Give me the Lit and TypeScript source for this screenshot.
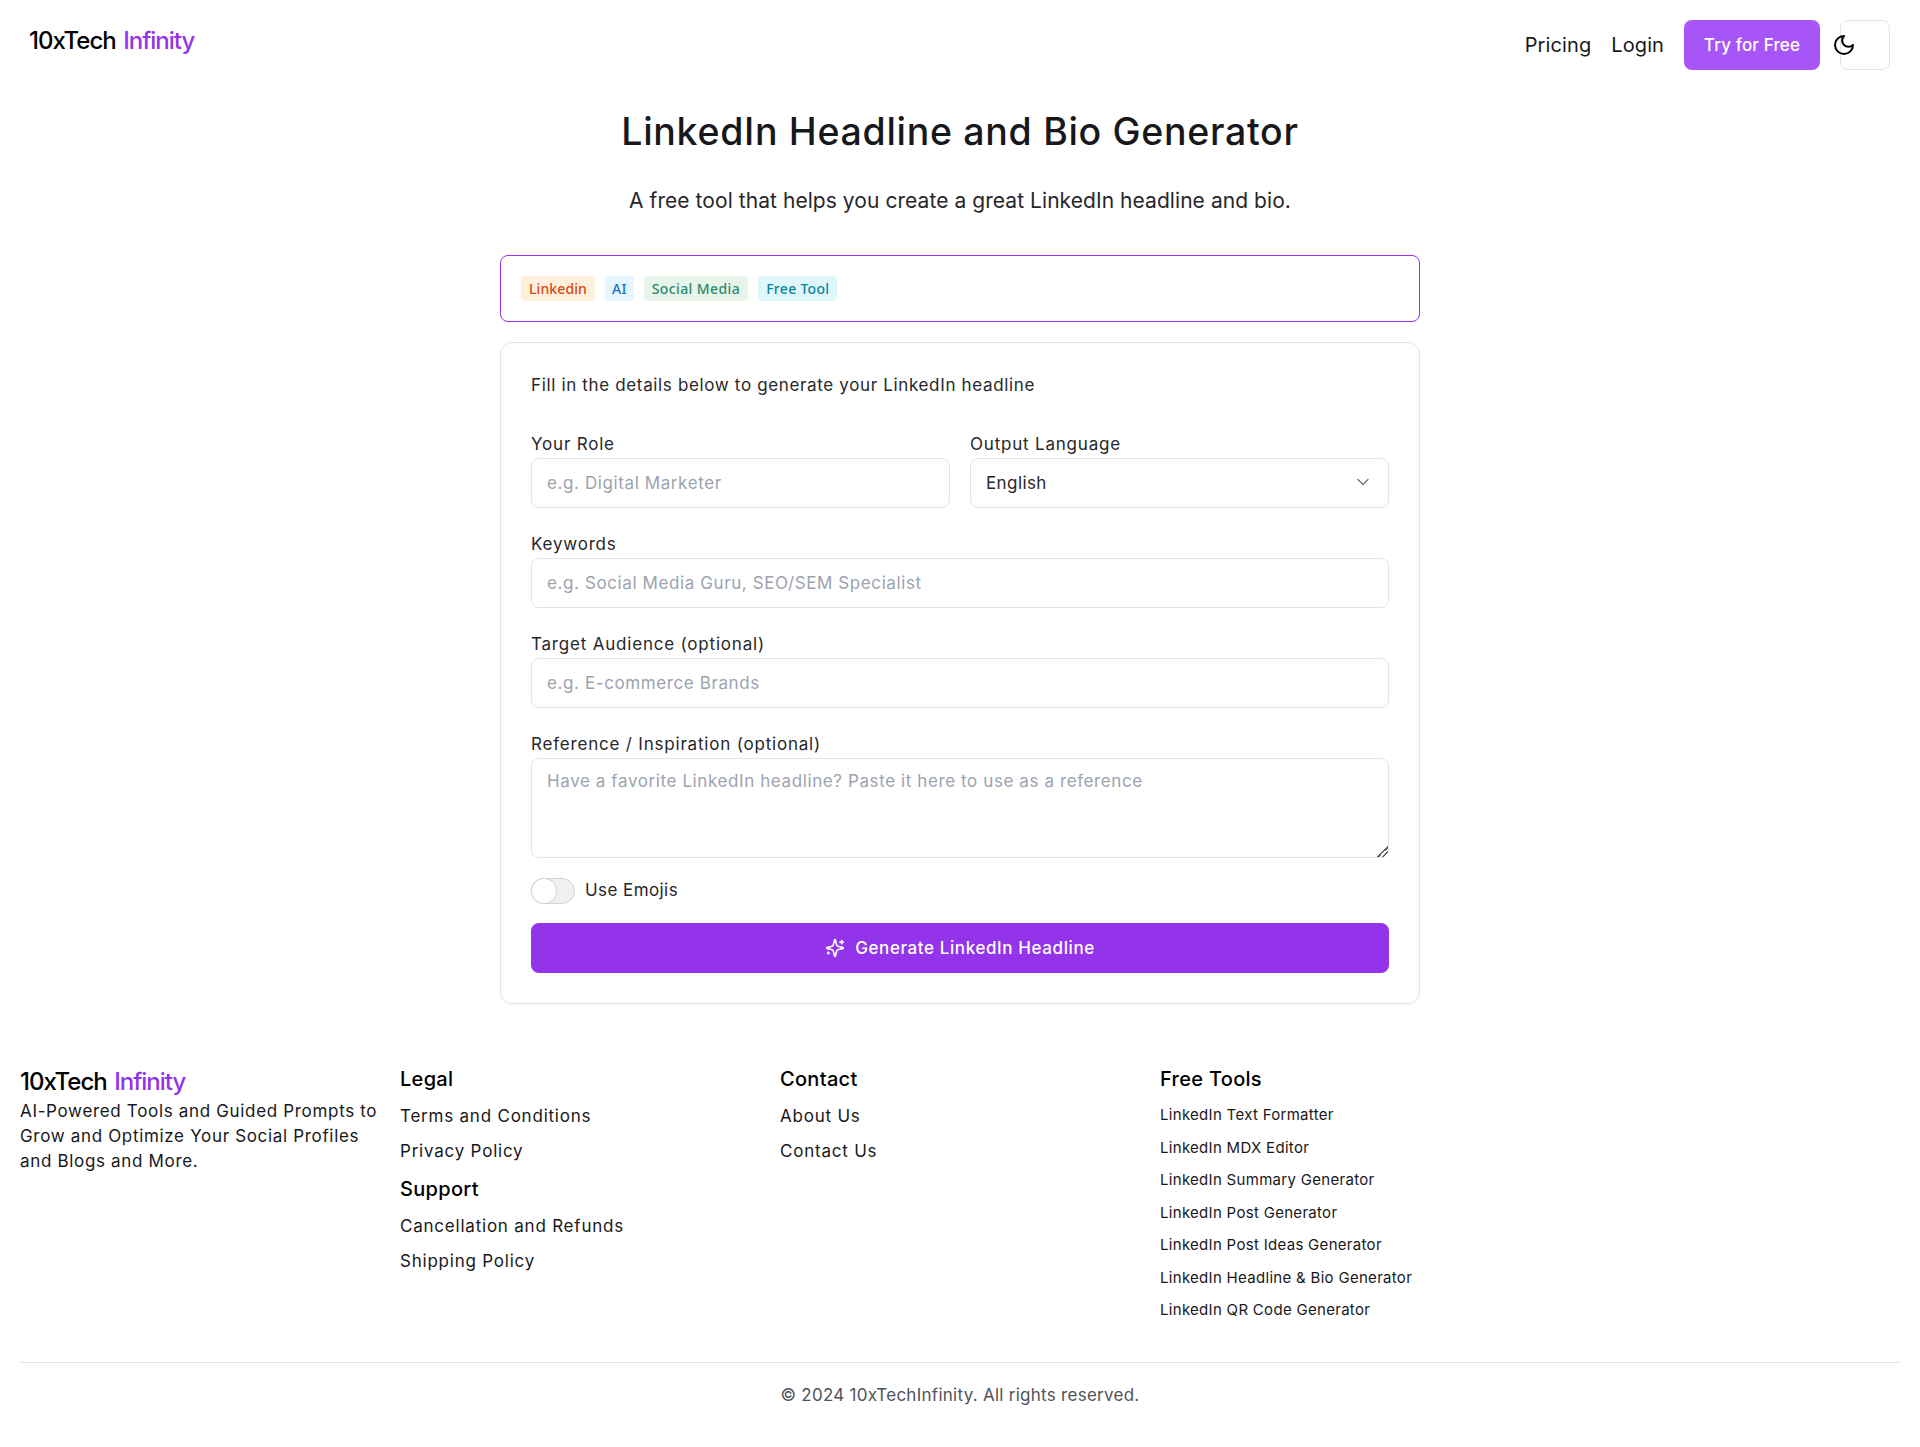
import { LitElement, html, css } from 'lit';
import { customElement } from 'lit/decorators.js';

const legal = ['Terms and Conditions', 'Privacy Policy'];
const support = ['Cancellation and Refunds', 'Shipping Policy'];
const contact = ['About Us', 'Contact Us'];
const tools = [
  'LinkedIn Text Formatter',
  'LinkedIn MDX Editor',
  'LinkedIn Summary Generator',
  'LinkedIn Post Generator',
  'LinkedIn Post Ideas Generator',
  'LinkedIn Headline & Bio Generator',
  'LinkedIn QR Code Generator',
];

@customElement('app-root')
export class AppRoot extends LitElement {
  static styles = css`
    :host {
      display: block;
      font-family: 'Inter', 'Noto Sans', sans-serif;
      color: #27272a;
      background: #fff;
      min-height: 1447px;
      letter-spacing: 0.6px;
    }
    * { box-sizing: border-box; }
    a { color: inherit; text-decoration: none; }

    .nav {
      display: flex;
      align-items: flex-start;
      justify-content: space-between;
      padding: 20px 30px 0 29px;
      height: 110px;
    }
    .logo {
      font-size: 24px;
      font-weight: 500;
      line-height: 30px;
      color: #000;
      letter-spacing: -1px;
      word-spacing: 2px;
    }
    .logo span { color: #9333ea; }
    .nav .logo { margin-top: 6px; }
    .nav-right { display: flex; align-items: center; gap: 20px; }
    .nav-link { font-size: 20px; color: #18181b; line-height: 50px; letter-spacing: 0.1px; }
    .try {
      height: 50px;
      width: 136px;
      border: 0;
      border-radius: 8px;
      background: #a855f7;
      color: #fff;
      font: 500 17px 'Inter', sans-serif;
      letter-spacing: 0.15px;
    }
    .theme {
      width: 50px;
      height: 50px;
      padding: 0;
      border: 1px solid #e4e4e7;
      border-radius: 8px;
      background: #fff;
      display: flex;
      align-items: center;
    }
    .theme svg { margin-left: -9px; }

    main { width: 920px; margin: 0 auto; }
    h1 {
      margin: 0;
      text-align: center;
      font-size: 37.5px;
      font-weight: 500;
      line-height: 44px;
      color: #18181b;
      letter-spacing: 0.69px;
    }
    .sub {
      margin: 33px 0 0;
      text-align: center;
      font-size: 21px;
      line-height: 28px;
      letter-spacing: 0.06px;
    }
    .tags {
      margin-top: 40px;
      height: 67px;
      padding: 20px;
      display: flex;
      gap: 10px;
      border: 1px solid #9333ea;
      border-radius: 8px;
    }
    .tag {
      height: 25px;
      padding: 0 8px;
      border-radius: 4px;
      font: 500 14px/25px 'Noto Sans', sans-serif;
      letter-spacing: 0.3px;
    }
    .orange { background: #fff0dd; color: #d9480f; letter-spacing: 0.1px; }
    .blue { background: #e7f5ff; color: #1971c2; padding: 0 7px; }
    .green { background: #e6f4ea; color: #2b8a6e; letter-spacing: 0.4px; }
    .cyan { background: #dff7fa; color: #0c8599; }

    .card {
      margin-top: 20px;
      height: 662px;
      padding: 30px;
      border: 1px solid #e4e4e7;
      border-radius: 12px;
      box-shadow: 0 1px 2px rgba(0, 0, 0, 0.04);
      display: flex;
      flex-direction: column;
    }
    .intro { font-size: 17px; line-height: 24px; margin-bottom: 31px; letter-spacing: 0.65px; }
    .row { display: grid; grid-template-columns: 1fr 1fr; gap: 20px; }
    .field { display: flex; flex-direction: column; margin-bottom: 20px; }
    label { font-size: 17px; line-height: 30px; height: 30px; padding-top: 1px; letter-spacing: 0.8px; }
    input, select, textarea {
      width: 100%;
      height: 50px;
      padding: 0 15px;
      border: 1px solid #e4e4e7;
      border-radius: 8px;
      background: #fff;
      color: #27272a;
      font: 400 17px 'Inter', sans-serif;
      letter-spacing: 0.6px;
      outline: none;
    }
    input::placeholder, textarea::placeholder { color: #9ca3af; opacity: 1; }
    .select-wrap { position: relative; }
    select { appearance: none; letter-spacing: 0.4px; }
    .select-wrap svg { position: absolute; right: 16px; top: 14px; pointer-events: none; }
    textarea {
      display: block;
      height: 100px;
      padding: 11px 15px;
      resize: vertical;
      line-height: 22px;
    }
    textarea::-webkit-resizer {
      background: linear-gradient(135deg, transparent 62%, #666 62%, #666 70%, transparent 70%, transparent 78%, #666 78%, #666 86%, transparent 86%);
    }
    .emoji { display: flex; align-items: center; gap: 10px; height: 26px; margin-bottom: 19px; font-size: 17px; letter-spacing: 0.42px; line-height: 24px; }
    .emoji span { margin-top: -2px; }
    .switch {
      width: 44px;
      height: 26px;
      border: 1px solid #d4d4d8;
      border-radius: 13px;
      background: #f0f0f3;
    }
    .switch i {
      display: block;
      width: 24px;
      height: 24px;
      border-radius: 50%;
      background: #fff;
      box-shadow: 0 0 1px 1px #d4d4d8;
    }
    .generate {
      height: 50px;
      border: 0;
      border-radius: 8px;
      background: #9333ea;
      color: #fff;
      font: 500 17px 'Inter', sans-serif;
      letter-spacing: 0.6px;
      display: flex;
      align-items: center;
      justify-content: center;
      gap: 10px;
    }

    footer { padding: 0 20px; margin-top: 60px; }
    .cols {
      display: grid;
      grid-template-columns: repeat(4, 360px);
      column-gap: 20px;
      height: 299px;
      border-bottom: 1px solid #e4e4e7;
    }
    .about p { margin: 1px 0 0; font-size: 17px; line-height: 25px; color: #18181b; letter-spacing: 0.67px; }
    .about .logo { line-height: 32px; margin-top: 2px; }
    h3 {
      margin: 0 0 5px;
      font-size: 20px;
      font-weight: 500;
      line-height: 30px;
      color: #000;
      letter-spacing: 0.3px;
    }
    .links { list-style: none; margin: 0 0 5px; padding: 0; }
    .links li { font-size: 17px; line-height: 35px; height: 35px; color: #18181b; letter-spacing: 0.78px; }
    .small { margin-top: 1px; }
    .small li { font-size: 15px; line-height: 32.5px; height: 32.5px; letter-spacing: 0.3px; }
    .copy {
      margin: 0;
      padding-top: 20px;
      text-align: center;
      font-size: 17px;
      line-height: 24px;
      color: #52525b;
      letter-spacing: 0.27px;
    }
  `;

  private list(items: string[], cls = '') {
    return html`<ul class="links ${cls}">${items.map((t) => html`<li><a href="#">${t}</a></li>`)}</ul>`;
  }

  render() {
    return html`
      <header class="nav">
        <div class="logo">10xTech <span>Infinity</span></div>
        <div class="nav-right">
          <a class="nav-link" href="#">Pricing</a>
          <a class="nav-link" href="#">Login</a>
          <button class="try">Try for Free</button>
          <button class="theme" aria-label="Toggle theme">
            <svg width="24" height="24" viewBox="0 0 24 24" fill="none" stroke="#000" stroke-width="2" stroke-linecap="round" stroke-linejoin="round">
              <path d="M12 3a6 6 0 0 0 9 9 9 9 0 1 1-9-9Z" />
            </svg>
          </button>
        </div>
      </header>
      <main>
        <h1>LinkedIn Headline and Bio Generator</h1>
        <p class="sub">A free tool that helps you create a great LinkedIn headline and bio.</p>
        <div class="tags">
          <span class="tag orange">Linkedin</span>
          <span class="tag blue">AI</span>
          <span class="tag green">Social Media</span>
          <span class="tag cyan">Free Tool</span>
        </div>
        <section class="card">
          <div class="intro">Fill in the details below to generate your LinkedIn headline</div>
          <div class="row">
            <div class="field">
              <label>Your Role</label>
              <input placeholder="e.g. Digital Marketer" />
            </div>
            <div class="field">
              <label>Output Language</label>
              <div class="select-wrap">
                <select><option>English</option></select>
                <svg width="20" height="20" viewBox="0 0 24 24" fill="none" stroke="#71717a" stroke-width="1.5" stroke-linecap="round" stroke-linejoin="round">
                  <path d="m6 9 6 6 6-6" />
                </svg>
              </div>
            </div>
          </div>
          <div class="field">
            <label>Keywords</label>
            <input placeholder="e.g. Social Media Guru, SEO/SEM Specialist" />
          </div>
          <div class="field">
            <label>Target Audience (optional)</label>
            <input placeholder="e.g. E-commerce Brands" />
          </div>
          <div class="field">
            <label>Reference / Inspiration (optional)</label>
            <textarea placeholder="Have a favorite LinkedIn headline? Paste it here to use as a reference"></textarea>
          </div>
          <div class="emoji">
            <div class="switch"><i></i></div>
            <span>Use Emojis</span>
          </div>
          <button class="generate">
            <svg width="20" height="20" viewBox="0 0 24 24" fill="none" stroke="#fff" stroke-width="2" stroke-linecap="round" stroke-linejoin="round">
              <path d="M9.937 15.5A2 2 0 0 0 8.5 14.063l-6.135-1.582a.5.5 0 0 1 0-.962L8.5 9.936A2 2 0 0 0 9.937 8.5l1.582-6.135a.5.5 0 0 1 .963 0L14.063 8.5A2 2 0 0 0 15.5 9.937l6.135 1.581a.5.5 0 0 1 0 .964L15.5 14.063a2 2 0 0 0-1.437 1.437l-1.582 6.135a.5.5 0 0 1-.963 0z" />
              <path d="M20 3v4M22 5h-4M4 17v2M5 18H3" />
            </svg>
            Generate LinkedIn Headline
          </button>
        </section>
      </main>
      <footer>
        <div class="cols">
          <div class="about">
            <div class="logo">10xTech <span>Infinity</span></div>
            <p>AI-Powered Tools and Guided Prompts to Grow and Optimize Your Social Profiles and Blogs and More.</p>
          </div>
          <div>
            <h3>Legal</h3>
            ${this.list(legal)}
            <h3>Support</h3>
            ${this.list(support)}
          </div>
          <div>
            <h3>Contact</h3>
            ${this.list(contact)}
          </div>
          <div>
            <h3>Free Tools</h3>
            ${this.list(tools, 'small')}
          </div>
        </div>
        <p class="copy">© 2024 10xTechInfinity. All rights reserved.</p>
      </footer>
    `;
  }
}
